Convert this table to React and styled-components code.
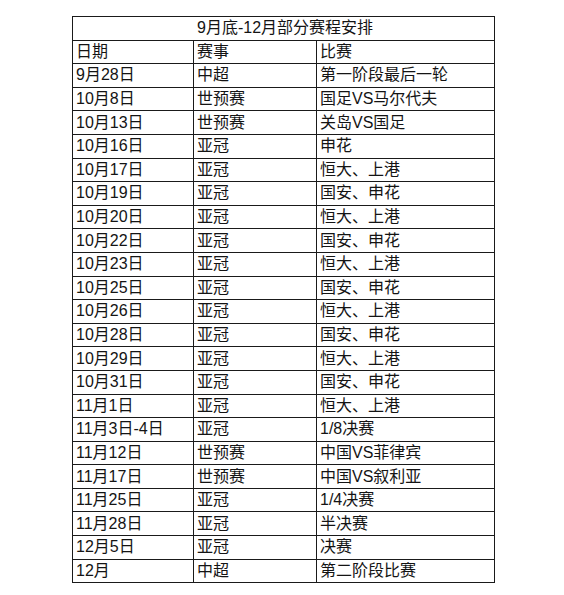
import styled, { createGlobalStyle } from "styled-components";

const GlobalStyle = createGlobalStyle`
  html, body {
    margin: 0;
    padding: 0;
    background: #fff;
  }
  body {
    font-family: "Liberation Sans", "Noto Sans CJK SC", sans-serif;
  }
`;

const Page = styled.div`
  width: 564px;
  height: 595px;
  padding: 16px 0 0 72px;
  box-sizing: border-box;
  background: #fff;
`;

const Table = styled.table`
  border-collapse: collapse;
  table-layout: fixed;
  width: 422px;
  font-size: 16px;
  color: #141414;
`;

const Col = styled.col`
  width: ${(p) => p.$w}px;
`;

const Row = styled.tr`
  height: 23.6px;
`;

const Cell = styled.td`
  border: 1px solid #1a1a1a;
  padding: 0 0 0 3px;
  line-height: 20px;
  white-space: nowrap;
  overflow: hidden;
  text-align: ${(p) => (p.$center ? "center" : "left")};
  vertical-align: middle;
`;

const rows = [
  ["9月28日", "中超", "第一阶段最后一轮"],
  ["10月8日", "世预赛", "国足VS马尔代夫"],
  ["10月13日", "世预赛", "关岛VS国足"],
  ["10月16日", "亚冠", "申花"],
  ["10月17日", "亚冠", "恒大、上港"],
  ["10月19日", "亚冠", "国安、申花"],
  ["10月20日", "亚冠", "恒大、上港"],
  ["10月22日", "亚冠", "国安、申花"],
  ["10月23日", "亚冠", "恒大、上港"],
  ["10月25日", "亚冠", "国安、申花"],
  ["10月26日", "亚冠", "恒大、上港"],
  ["10月28日", "亚冠", "国安、申花"],
  ["10月29日", "亚冠", "恒大、上港"],
  ["10月31日", "亚冠", "国安、申花"],
  ["11月1日", "亚冠", "恒大、上港"],
  ["11月3日-4日", "亚冠", "1/8决赛"],
  ["11月12日", "世预赛", "中国VS菲律宾"],
  ["11月17日", "世预赛", "中国VS叙利亚"],
  ["11月25日", "亚冠", "1/4决赛"],
  ["11月28日", "亚冠", "半决赛"],
  ["12月5日", "亚冠", "决赛"],
  ["12月", "中超", "第二阶段比赛"],
];

export default function App() {
  return (
    <Page>
      <GlobalStyle />
      <Table>
        <colgroup>
          <Col $w={121} />
          <Col $w={123} />
          <Col $w={178} />
        </colgroup>
        <tbody>
          <Row>
            <Cell colSpan={3} $center>
              9月底-12月部分赛程安排
            </Cell>
          </Row>
          <Row>
            <Cell>日期</Cell>
            <Cell>赛事</Cell>
            <Cell>比赛</Cell>
          </Row>
          {rows.map((r) => (
            <Row key={r[0]}>
              <Cell>{r[0]}</Cell>
              <Cell>{r[1]}</Cell>
              <Cell>{r[2]}</Cell>
            </Row>
          ))}
        </tbody>
      </Table>
    </Page>
  );
}
